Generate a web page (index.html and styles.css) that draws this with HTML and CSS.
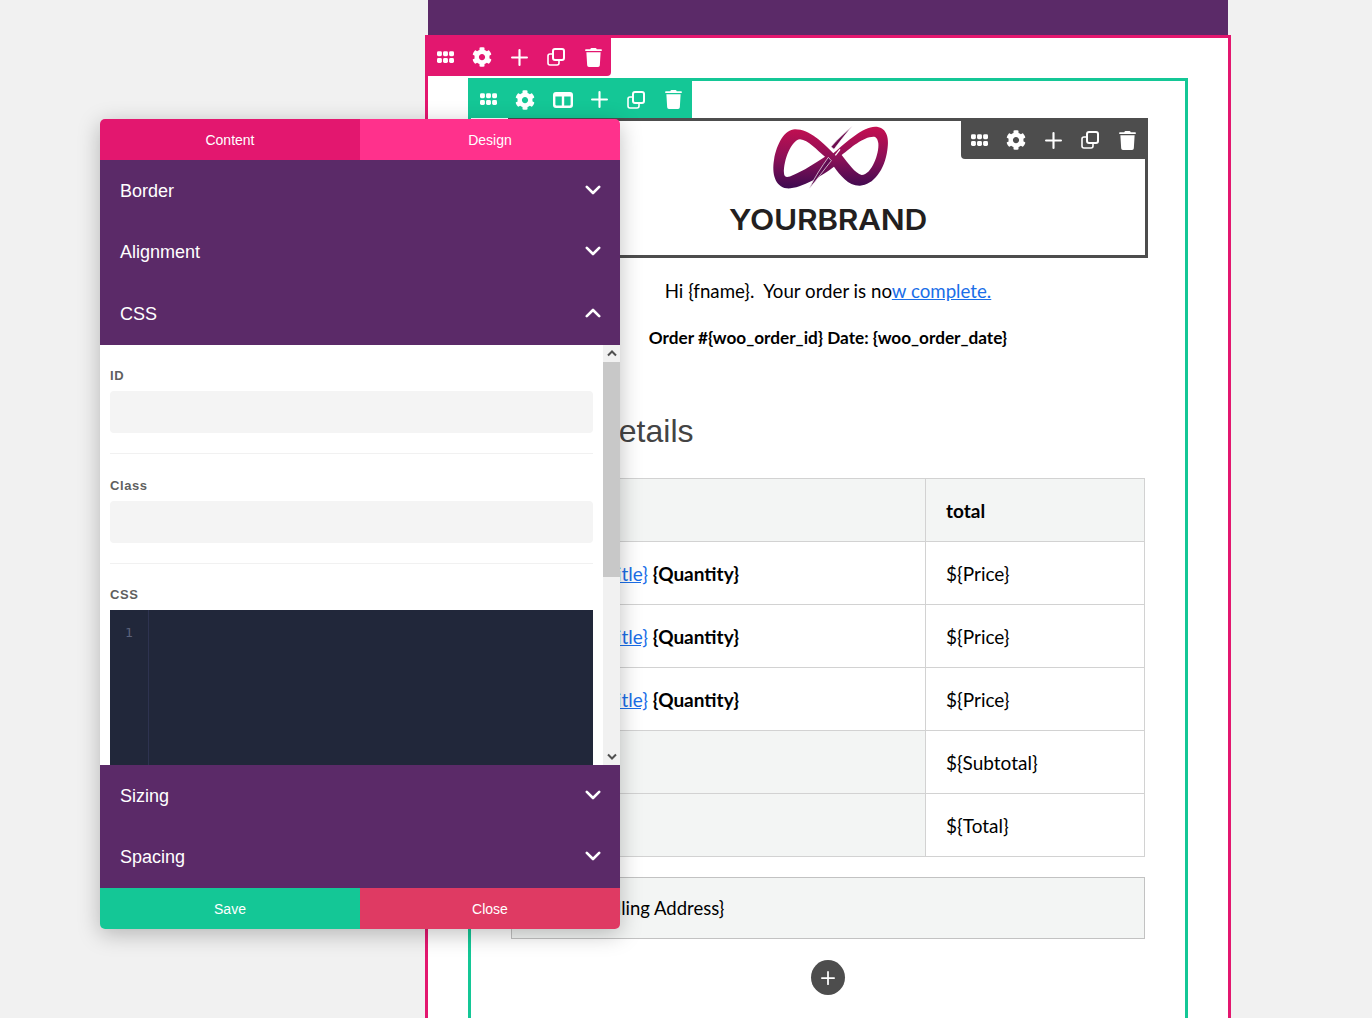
FILE: index.html
```html
<!doctype html>
<html lang="en">
<head>
  <meta charset="UTF-8">
  <title>Email builder</title>
  <link rel="stylesheet" href="styles.css">
</head>
<body>
  <svg class="icon-defs" width="0" height="0">
    <symbol id="i-grid" viewBox="0 0 16 12">
      <rect x="0" y="0" width="4.6" height="4.8" rx="1.4"/><rect x="5.7" y="0" width="4.6" height="4.8" rx="1.4"/><rect x="11.4" y="0" width="4.6" height="4.8" rx="1.4"/>
      <rect x="0" y="6.4" width="4.6" height="4.8" rx="1.4"/><rect x="5.7" y="6.4" width="4.6" height="4.8" rx="1.4"/><rect x="11.4" y="6.4" width="4.6" height="4.8" rx="1.4"/>
    </symbol>
    <symbol id="i-cog" viewBox="0 0 512 512">
      <path d="M487.4 315.7l-42.6-24.6c4.3-23.2 4.3-47 0-70.2l42.6-24.6c4.9-2.8 7.1-8.6 5.5-14-11.1-35.6-30-67.8-54.7-94.6-3.8-4.1-10-5.1-14.8-2.3L380.8 110c-17.9-15.4-38.5-27.3-60.8-35.1V25.8c0-5.6-3.9-10.5-9.4-11.7-36.7-8.2-74.3-7.8-109.2 0-5.5 1.2-9.4 6.1-9.4 11.7V75c-22.2 7.9-42.8 19.8-60.8 35.1L88.7 85.5c-4.9-2.8-11-1.9-14.8 2.3-24.7 26.7-43.6 58.9-54.7 94.6-1.7 5.4.6 11.2 5.5 14L67.3 221c-4.3 23.2-4.3 47 0 70.2l-42.6 24.6c-4.9 2.8-7.1 8.6-5.5 14 11.1 35.6 30 67.8 54.7 94.6 3.8 4.1 10 5.1 14.8 2.3l42.6-24.6c17.9 15.4 38.5 27.3 60.8 35.1v49.2c0 5.6 3.9 10.5 9.4 11.7 36.7 8.2 74.3 7.8 109.2 0 5.5-1.2 9.4-6.1 9.4-11.7v-49.2c22.2-7.9 42.8-19.8 60.8-35.1l42.6 24.6c4.9 2.8 11 1.9 14.8-2.3 24.7-26.7 43.6-58.9 54.7-94.6 1.5-5.5-.7-11.3-5.6-14.1zM256 336c-44.1 0-80-35.9-80-80s35.9-80 80-80 80 35.9 80 80-35.9 80-80 80z"/>
    </symbol>
    <symbol id="i-plus" viewBox="0 0 16 16">
      <path d="M8 1v14M1 8h14" fill="none" stroke="#fff" stroke-width="2" stroke-linecap="round"/>
    </symbol>
    <symbol id="i-clone" viewBox="0 0 18 18">
      <rect x="6" y="1" width="11" height="11" rx="2" fill="none" stroke="#fff" stroke-width="2"/>
      <path d="M6 6H3a2 2 0 0 0-2 2v7a2 2 0 0 0 2 2h7a2 2 0 0 0 2-2v-3" fill="none" stroke="#fff" stroke-width="1.6"/>
    </symbol>
    <symbol id="i-trash" viewBox="0 0 448 512">
      <path d="M432 32H312l-9.4-18.7A24 24 0 0 0 281.1 0H166.8a23.72 23.72 0 0 0-21.4 13.3L136 32H16A16 16 0 0 0 0 48v16a16 16 0 0 0 16 16h416a16 16 0 0 0 16-16V48a16 16 0 0 0-16-16zM53.2 467a48 48 0 0 0 47.9 45h245.8a48 48 0 0 0 47.9-45L416 112H32z"/>
    </symbol>
    <symbol id="i-columns" viewBox="0 0 20 16">
      <path fill-rule="evenodd" d="M3 0h14a3 3 0 0 1 3 3v10a3 3 0 0 1-3 3H3a3 3 0 0 1-3-3V3a3 3 0 0 1 3-3zM2.4 4.5v8a1 1 0 0 0 1 1h5.4v-9zM11.2 4.5v9h5.4a1 1 0 0 0 1-1v-8z"/>
    </symbol>
    <symbol id="i-down" viewBox="0 0 16 10">
      <path d="M1.8 1.8L8 8l6.2-6.2" fill="none" stroke="#fff" stroke-width="2.6" stroke-linecap="round" stroke-linejoin="round"/>
    </symbol>
    <symbol id="i-up" viewBox="0 0 16 10">
      <path d="M1.8 8.2L8 2l6.2 6.2" fill="none" stroke="#fff" stroke-width="2.6" stroke-linecap="round" stroke-linejoin="round"/>
    </symbol>
  </svg>

  <div class="stage">
    <div class="top-band"></div>

    <div class="section-outline">
      <div class="toolbar toolbar-pink">
        <svg class="ic ic-grid"><use href="#i-grid"/></svg>
        <svg class="ic ic-cog"><use href="#i-cog"/></svg>
        <svg class="ic ic-plus"><use href="#i-plus"/></svg>
        <svg class="ic ic-clone"><use href="#i-clone"/></svg>
        <svg class="ic ic-trash"><use href="#i-trash"/></svg>
      </div>

      <div class="row-outline">
        <div class="toolbar toolbar-green">
          <svg class="ic ic-grid"><use href="#i-grid"/></svg>
          <svg class="ic ic-cog"><use href="#i-cog"/></svg>
          <svg class="ic ic-columns"><use href="#i-columns"/></svg>
          <svg class="ic ic-plus"><use href="#i-plus"/></svg>
          <svg class="ic ic-clone"><use href="#i-clone"/></svg>
          <svg class="ic ic-trash"><use href="#i-trash"/></svg>
        </div>

        <div class="logo-box">
          <div class="toolbar toolbar-dark">
            <svg class="ic ic-grid"><use href="#i-grid"/></svg>
            <svg class="ic ic-cog"><use href="#i-cog"/></svg>
            <svg class="ic ic-plus"><use href="#i-plus"/></svg>
            <svg class="ic ic-clone"><use href="#i-clone"/></svg>
            <svg class="ic ic-trash"><use href="#i-trash"/></svg>
          </div>
          <svg class="logo-mark" viewBox="0 3 408 222">
            <defs>
              <linearGradient id="logo-grad" x1="0" y1="0" x2="0" y2="1">
                <stop offset="0" stop-color="#c50f50"/>
                <stop offset="0.5" stop-color="#8d1057"/>
                <stop offset="1" stop-color="#3c0a50"/>
              </linearGradient>
            </defs>
            <path fill="url(#logo-grad)" fill-rule="evenodd" d="M105 28C150 28 190 70 220 100C260 65 310 20 345 20C378 20 389 50 382 90C374 150 340 195 300 197C265 198 240 165 222 140C190 165 120 208 80 205C45 200 35 160 42 120C50 70 75 28 105 28ZM120 58C95 60 70 120 72 160C73 175 85 172 100 165C130 152 165 130 195 110C170 90 145 60 120 58ZM340 50C310 50 270 85 245 105C265 130 285 160 305 165C335 165 358 100 355 70C353 55 347 50 340 50Z"/>
            <path d="M240 88L226 106" stroke="#fff" stroke-width="4" fill="none"/>
            <path d="M277 18C255 45 235 70 222 88L213 80C235 55 255 38 277 18Z" fill="#6d0d50" stroke="#fff" stroke-width="2"/>
            <path d="M147 207C165 170 185 140 205 112L214 122C195 145 170 180 147 207Z" fill="#5f0c52" stroke="#fff" stroke-width="2"/>
          </svg>
          <div class="logo-word">YOURBRAND</div>
        </div>

        <p class="greeting">Hi {fname}.&nbsp; Your order is no<a href="#">w complete.</a></p>
        <p class="order-line">Order #{woo_order_id} Date: {woo_order_date}</p>
        <h2 class="details-title">Order Details</h2>

        <table class="order-table">
          <tr class="row-shaded"><th class="col-main">product</th><th>total</th></tr>
          <tr><td class="col-main"><a href="#">{Product Title}</a> <b>{Quantity}</b></td><td>${Price}</td></tr>
          <tr><td class="col-main"><a href="#">{Product Title}</a> <b>{Quantity}</b></td><td>${Price}</td></tr>
          <tr><td class="col-main"><a href="#">{Product Title}</a> <b>{Quantity}</b></td><td>${Price}</td></tr>
          <tr><td class="col-main cell-shaded">Subtotal</td><td>${Subtotal}</td></tr>
          <tr><td class="col-main cell-shaded">Total</td><td>${Total}</td></tr>
        </table>

        <div class="billing-box">{Billing Address}</div>

        <div class="add-row">
          <span class="add-btn"><svg class="ic ic-plus-sm"><use href="#i-plus"/></svg></span>
        </div>
      </div>
    </div>
  </div>

  <div class="panel">
    <div class="panel-tabs">
      <div class="tab tab-content">Content</div>
      <div class="tab tab-design">Design</div>
    </div>

    <div class="acc-head">Border <svg class="chev"><use href="#i-down"/></svg></div>
    <div class="acc-head">Alignment <svg class="chev"><use href="#i-down"/></svg></div>
    <div class="acc-head">CSS <svg class="chev"><use href="#i-up"/></svg></div>

    <div class="panel-body">
      <div class="panel-fields">
        <div class="field">
          <label class="field-label">ID</label>
          <div class="field-input"></div>
        </div>
        <div class="field">
          <label class="field-label">Class</label>
          <div class="field-input"></div>
        </div>
        <div class="field field-code">
          <label class="field-label">CSS</label>
          <div class="code-editor">
            <div class="code-gutter">1</div>
          </div>
        </div>
      </div>
      <div class="scrollbar">
        <svg class="scroll-arrow" viewBox="0 0 10 7"><path d="M1 5.5L5 1.5l4 4" fill="none" stroke="#505050" stroke-width="2"/></svg>
        <div class="scroll-thumb"></div>
        <svg class="scroll-arrow scroll-arrow-end" viewBox="0 0 10 7"><path d="M1 1.5l4 4 4-4" fill="none" stroke="#505050" stroke-width="2"/></svg>
      </div>
    </div>

    <div class="acc-head">Sizing <svg class="chev"><use href="#i-down"/></svg></div>
    <div class="acc-head">Spacing <svg class="chev"><use href="#i-down"/></svg></div>

    <div class="panel-foot">
      <div class="tab tab-save">Save</div>
      <div class="tab tab-close">Close</div>
    </div>
  </div>
</body>
</html>
```

FILE: styles.css
```css
html,body{margin:0;padding:0;height:1018px;overflow:hidden;background:#f1f1f1;}
body{position:relative;font-family:"Liberation Sans",Arial,sans-serif;}
.icon-defs{position:absolute;}

/* email canvas */
.stage{width:800px;height:1018px;margin-left:428px;background:#fff;overflow:visible;}
.top-band{height:35px;background:#5b2a68;}
.section-outline{position:relative;margin:0 -3px;height:983px;box-sizing:border-box;border:3px solid #e3176f;border-bottom:0;padding:40px 40px 0;}
.row-outline{position:relative;height:940px;box-sizing:border-box;border:3px solid #14c796;border-bottom:0;padding:37px 37px 0;font-family:Lato,"Liberation Sans",sans-serif;color:#000;}

/* toolbars */
.toolbar{position:absolute;height:41px;display:flex;align-items:center;z-index:2;box-sizing:border-box;padding-top:3px;}
.toolbar .ic{fill:#fff;flex:none;}
.toolbar-pink{left:-3px;top:-3px;width:186px;background:#e3176f;border-radius:0 0 4px 0;padding-left:12px;}
.toolbar-green{left:-3px;top:-3px;width:224px;height:40px;background:#14c796;padding-left:12px;}
.toolbar-dark{right:-3px;top:-3px;width:187px;background:#4d4d4d;border-radius:0 0 0 4px;padding-left:10px;}
.ic-grid{width:17px;height:13px;margin-right:18px;}
.ic-cog{width:20px;height:20px;margin-right:19px;}
.toolbar-green .ic-cog{margin-right:18px;}
.ic-columns{width:20px;height:16px;margin-right:18px;}
.ic-plus{width:17px;height:17px;margin-right:19px;}
.ic-clone{width:18px;height:18px;margin-right:20px;}
.ic-trash{width:17px;height:19px;}

/* logo */
.logo-box{position:relative;height:140px;box-sizing:border-box;border:3px solid #4d4d4d;text-align:center;}
.logo-mark{display:block;width:136px;height:74px;margin:0 auto;}
.logo-word{margin-top:7px;font-family:Inter,"Liberation Sans",sans-serif;font-size:29px;line-height:36px;font-weight:600;letter-spacing:-.3px;color:#231f20;transform:scaleX(1.09);}

/* email text */
.greeting{margin:21px 0 0;font-size:18.7px;line-height:24px;text-align:center;}
.greeting a{color:#1a6ee8;}
.order-line{margin:24px 0 0;font-size:17.2px;line-height:22px;font-weight:700;text-align:center;}
.details-title{margin:62px 0 0 -3px;font-family:"Liberation Sans",Arial,sans-serif;font-size:32px;line-height:40px;font-weight:400;color:#444;}
.order-table{width:634px;margin:27px 0 0 3px;border-collapse:collapse;table-layout:fixed;font-size:19px;}
.order-table th,.order-table td{height:63px;padding:0 0 0 20px;border:1px solid #d2d2d2;text-align:left;box-sizing:border-box;}
.order-table th{font-weight:700;}
.order-table a{color:#1a6ee8;}
.order-table .col-main{width:414px;padding-left:18px;}
.row-shaded th,.cell-shaded{background:#f3f5f4;}
.billing-box{width:634px;height:62px;margin:20px 0 0 3px;box-sizing:border-box;padding-left:83px;border:1px solid #c2c2c2;background:#f3f5f4;font-size:18.5px;line-height:60px;}
.add-row{display:flex;justify-content:center;margin-top:21px;}
.add-btn{width:34px;height:35px;border-radius:50%;background:#4d4d4d;display:flex;align-items:center;justify-content:center;}
.ic-plus-sm{width:14px;height:14px;}

/* settings panel */
.panel{position:absolute;left:100px;top:119px;width:520px;height:810px;border-radius:5px;overflow:hidden;display:flex;flex-direction:column;box-shadow:0 5px 22px rgba(0,0,0,.25);z-index:5;}
.panel-tabs,.panel-foot{display:flex;height:41px;flex:none;}
.tab{flex:1;display:flex;align-items:center;justify-content:center;color:#fff;font-size:14px;}
.tab-content{background:#e3176f;}
.tab-design{background:#ff318c;}
.tab-save{background:#14c796;}
.tab-close{background:#df3a63;}
.acc-head{flex:none;height:61.6px;box-sizing:border-box;padding:1px 19px 0 20px;background:#5b2a68;color:#fff;font-size:18px;display:flex;align-items:center;justify-content:space-between;}
.chev{width:16px;height:10px;margin-top:-3px;}

.panel-body{flex:1;min-height:0;display:flex;background:#fff;overflow:hidden;}
.panel-fields{flex:1;min-width:0;padding:23px 10px 0;overflow:hidden;}
.field{padding-bottom:20px;margin-bottom:24px;border-bottom:1px solid #f1f1f1;}
.field-code{border-bottom:0;margin-top:-1px;}
.field-label{display:block;height:16px;margin-bottom:7px;font-size:13px;line-height:16px;font-weight:700;letter-spacing:.6px;color:#5f5f5f;}
.field-input{height:42px;border-radius:4px;background:#f4f4f4;}
.code-editor{height:220px;display:flex;background:#21273a;}
.code-gutter{width:38px;padding-top:15px;box-sizing:content-box;border-right:1px solid #2e3350;font-family:"DejaVu Sans Mono","Liberation Mono",monospace;font-size:13px;line-height:16px;color:#5c627a;text-align:center;}

.scrollbar{flex:none;width:17px;position:relative;background:#f1f1f1;display:flex;flex-direction:column;align-items:center;}
.scroll-arrow{flex:none;width:10px;height:7px;margin:5px 0;}
.scroll-thumb{flex:none;width:17px;height:215px;background:#c8c8c8;}
.scroll-arrow-end{margin-top:auto;}
```
